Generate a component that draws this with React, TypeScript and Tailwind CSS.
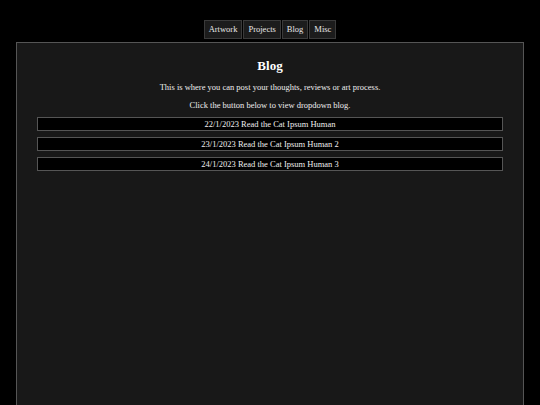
export default function App() {
  const posts = [
    "22/1/2023 Read the Cat Ipsum Human",
    "23/1/2023 Read the Cat Ipsum Human 2",
    "24/1/2023 Read the Cat Ipsum Human 3",
  ];
  return (
    <div className="h-[405px] overflow-hidden bg-black text-white [font-family:'Liberation_Serif',serif]">
      <nav className="flex justify-center gap-px pt-[20px] h-[42px]">
        {["Artwork", "Projects", "Blog", "Misc"].map((n) => (
          <button
            key={n}
            className="h-[19px] px-[4px] border border-[#3a3a3a] bg-[#1c1c1c] text-[8.5px] leading-none text-[#e8e8e8]"
          >
            {n}
          </button>
        ))}
      </nav>
      <main className="mx-[16px] h-[400px] border border-[#555] border-b-0 bg-[#181818] px-[20px] pt-[15px]">
        <h2 className="text-center text-[13px] font-bold leading-[16px] text-white">Blog</h2>
        <p className="mt-[8px] text-center text-[8.5px] leading-[10px] text-[#eee]">
          This is where you can post your thoughts, reviews or art process.
        </p>
        <p className="mt-[8px] text-center text-[8.5px] leading-[10px] text-[#eee]">
          Click the button below to view dropdown blog.
        </p>
        <div className="mt-[7px] flex flex-col gap-[6px]">
          {posts.map((p) => (
            <button
              key={p}
              className="h-[14px] w-full border border-[#555] bg-black text-center text-[8.5px] leading-none text-[#eee]"
            >
              {p}
            </button>
          ))}
        </div>
      </main>
    </div>
  );
}
